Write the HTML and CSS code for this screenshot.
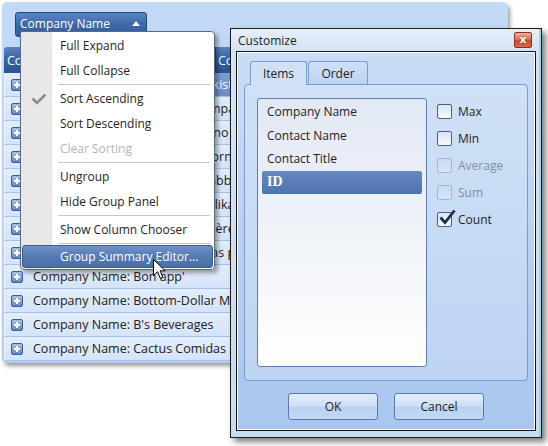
FILE: index.html
```html
<!DOCTYPE html>
<html>
<head>
<meta charset="utf-8">
<link rel="stylesheet" href="styles.css">
</head>
<body>
<div class="grid-window">
  <div class="group-panel">
    <div class="group-btn"><span>Company Name</span><span class="sort-arrow"></span></div>
  </div>
  <div class="grid">
    <div class="hdr"><div class="hcell c1">Contact Name</div><div class="hcell c2">Contact Title</div></div>
    <div class="row focused"><span class="exp"><i></i></span><span class="txt">Company Name: Alfreds Futterkiste</span></div>
    <div class="row"><span class="exp"><i></i></span><span class="txt">Company Name: Ana Trujillo Emparedados y helados</span></div>
    <div class="row"><span class="exp"><i></i></span><span class="txt">Company Name: Antonio Moreno Taquería</span></div>
    <div class="row"><span class="exp"><i></i></span><span class="txt">Company Name: Around the Horn</span></div>
    <div class="row"><span class="exp"><i></i></span><span class="txt">Company Name: Berglunds snabbköp</span></div>
    <div class="row"><span class="exp"><i></i></span><span class="txt">Company Name: Blauer See Delikatessen</span></div>
    <div class="row"><span class="exp"><i></i></span><span class="txt">Company Name: Blondesddsl père et fils</span></div>
    <div class="row"><span class="exp"><i></i></span><span class="txt">Company Name: Bólido Comidas preparadas</span></div>
    <div class="row"><span class="exp"><i></i></span><span class="txt">Company Name: Bon app'</span></div>
    <div class="row"><span class="exp"><i></i></span><span class="txt">Company Name: Bottom-Dollar Markets</span></div>
    <div class="row"><span class="exp"><i></i></span><span class="txt">Company Name: B's Beverages</span></div>
    <div class="row"><span class="exp"><i></i></span><span class="txt">Company Name: Cactus Comidas para llevar</span></div>
  </div>
</div>

<div class="menu">
  <div class="mi">Full Expand</div>
  <div class="mi">Full Collapse</div>
  <div class="msep"></div>
  <div class="mi checked"><svg class="check" width="16" height="12" viewBox="0 0 16 12"><polyline points="1.5,5.5 6,10 14.5,1.5" fill="none" stroke="#8c8c8c" stroke-width="2.6"/></svg>Sort Ascending</div>
  <div class="mi">Sort Descending</div>
  <div class="mi disabled">Clear Sorting</div>
  <div class="msep"></div>
  <div class="mi">Ungroup</div>
  <div class="mi">Hide Group Panel</div>
  <div class="msep"></div>
  <div class="mi">Show Column Chooser</div>
  <div class="msep"></div>
  <div class="mi hot">Group Summary Editor...</div>
</div>

<svg class="cursor" width="14" height="22" viewBox="0 0 14 22"><path d="M0.5,0.5 L0.5,16.5 L4.5,12.7 L7.3,19.3 L9.8,18.2 L7.1,11.8 L12.3,11.8 Z" fill="#fff" stroke="#000" stroke-width="1" stroke-linejoin="miter"/></svg>

<div class="dialog">
  <div class="title"><span>Customize</span><span class="close">x</span></div>
  <div class="client">
    <div class="tabs"><div class="tab active">Items</div><div class="tab">Order</div></div>
    <div class="panel">
      <div class="listbox">
        <div class="li">Company Name</div>
        <div class="li">Contact Name</div>
        <div class="li">Contact Title</div>
        <div class="li sel">ID</div>
      </div>
      <div class="checks">
        <div class="cb"><span class="box"></span>Max</div>
        <div class="cb"><span class="box"></span>Min</div>
        <div class="cb disabled"><span class="box"></span>Average</div>
        <div class="cb disabled"><span class="box"></span>Sum</div>
        <div class="cb"><span class="box"><svg class="tick" width="18" height="18" viewBox="0 0 18 18"><path d="M2.5,9.5 L7,14.5 L16.5,2.5" fill="none" stroke="#1c2f52" stroke-width="2.8"/></svg></span>Count</div>
      </div>
    </div>
    <div class="buttons"><div class="btn">OK</div><div class="btn">Cancel</div></div>
  </div>
</div>
</body>
</html>
```
FILE: styles.css
```css
html, body {
  margin: 0;
  padding: 0;
}
body {
  width: 548px;
  height: 446px;
  background: #fff;
  position: relative;
  overflow: hidden;
  font-family: "Open Sans", "Noto Sans", sans-serif;
  font-size: 12px;
  color: #1e1e1e;
}

/* grid window */
.grid-window {
  margin: 2px 0 0 2px;
  width: 506px;
  height: 361px;
  border-radius: 5px;
  background: linear-gradient(#c3daf7, #b3cdf1);
  box-shadow: 2px 3px 4px rgba(0, 0, 0, .4);
  overflow: hidden;
}
.group-panel {
  height: 45px;
  padding: 10px 0 0 13px;
  box-sizing: border-box;
}
.group-btn {
  width: 132px;
  height: 25px;
  box-sizing: border-box;
  border: 1px solid #234679;
  border-radius: 3px;
  background: linear-gradient(#5a86c4, #3d6aab 50%, #305d9d);
  color: #fff;
  display: flex;
  align-items: center;
  padding: 0 6px 3px 4px;
  font-size: 12px;
}
.sort-arrow {
  margin-left: auto;
  width: 0;
  height: 0;
  border-left: 4px solid transparent;
  border-right: 4px solid transparent;
  border-bottom: 5px solid #fff;
}
.grid {
  margin-left: 2px;
}
.hdr {
  display: flex;
  height: 26px;
  border-radius: 3px 3px 0 0;
  background: linear-gradient(#5a83bf, #3766a6 45%, #2a5391);
  color: #fff;
  font-size: 12.5px;
  overflow: hidden;
  white-space: nowrap;
}
.hcell {
  display: flex;
  align-items: center;
  box-sizing: border-box;
}
.hcell.c1 {
  width: 212px;
  padding-left: 3px;
  border-right: 1px solid #24477c;
}
.hcell.c2 {
  padding-left: 2px;
}
.row {
  display: flex;
  height: 24px;
  box-sizing: border-box;
  border-bottom: 1px solid #a8c3e9;
  border-left: 1px solid #eef4fd;
  background: linear-gradient(#e3edfb, #d4e3f8);
  white-space: nowrap;
  overflow: hidden;
  font-size: 12.5px;
}
.exp {
  width: 23px;
  flex: none;
  display: flex;
  align-items: center;
  padding-left: 6px;
  box-sizing: border-box;
}
.exp i {
  position: relative;
  width: 12px;
  height: 12px;
  box-sizing: border-box;
  border: 1px solid #3d5d99;
  border-radius: 2px;
  background: linear-gradient(#a9bde6, #6a88c6);
}
.exp i::before, .exp i::after {
  content: "";
  position: absolute;
  background: #fff;
}
.exp i::before {
  left: 2px;
  top: 4px;
  width: 6px;
  height: 2px;
}
.exp i::after {
  left: 4px;
  top: 2px;
  width: 2px;
  height: 6px;
}
.txt {
  flex: 1;
  display: flex;
  align-items: center;
  padding-left: 5px;
  color: #22201c;
}
.row.focused .txt {
  background: linear-gradient(#7c9ed3, #6a8ec8);
  color: #fff;
}

/* context menu */
.menu {
  position: absolute;
  left: 20px;
  top: 31px;
  width: 195px;
  box-sizing: border-box;
  border: 1px solid #5b6a80;
  border-radius: 2px 4px 4px 4px;
  padding: 1px 0 1px;
  background: linear-gradient(to right, #e8e8e8 31px, #fff 31px);
  box-shadow: 3px 3px 4px rgba(0, 0, 0, .35);
  font-size: 12px;
}
.mi {
  position: relative;
  height: 25px;
  line-height: 25px;
  padding-left: 39px;
  color: #1e1e1e;
  white-space: nowrap;
}
.mi.disabled {
  color: #b4b4b4;
}
.mi .check {
  position: absolute;
  left: 10px;
  top: 7px;
}
.msep {
  height: 1px;
  margin: 1px 4px 1px 37px;
  background: #c8c8c8;
}
.mi.hot {
  margin: 0 1px;
  height: 23px;
  line-height: 21px;
  padding-left: 37px;
  box-sizing: border-box;
  border: 1px solid #3a5a8e;
  border-radius: 3px;
  background: linear-gradient(#7193c8, #5579b3 50%, #4b6fa9);
  color: #fff;
}

.cursor {
  position: absolute;
  left: 153px;
  top: 259px;
}

/* dialog */
.dialog {
  position: absolute;
  left: 230px;
  top: 28px;
  width: 312px;
  height: 410px;
  box-sizing: border-box;
  border: 1px solid #1c1c1c;
  padding: 0 5px 5px;
  background: linear-gradient(#e6eef8, #d6e3f4 22px, #c9daf1);
  box-shadow: 4px 4px 6px rgba(0, 0, 0, .5), inset -2px 0 0 #9fd5e3;
}
.title {
  height: 22px;
  display: flex;
  align-items: center;
  padding-left: 2px;
  font-size: 12px;
  color: #1e1e1e;
}
.close {
  margin-left: auto;
  margin-right: 4px;
  width: 18px;
  height: 16px;
  box-sizing: border-box;
  border: 1px solid #8a3020;
  border-radius: 2px;
  background: linear-gradient(#eab0a0, #d9705a 45%, #c84a32 55%, #d66a52);
  color: #fff;
  font-family: "DejaVu Sans", sans-serif;
  font-weight: bold;
  font-size: 11px;
  line-height: 13px;
  text-align: center;
  text-shadow: 0 0 1px #5a1a10;
}
.client {
  height: 380px;
  box-sizing: border-box;
  border: 1px solid #151515;
  box-shadow: inset 0 0 0 1px #fff;
  background: linear-gradient(#c9dcf4, #a9c6ee);
  padding: 9px 7px 0;
}
.tabs {
  display: flex;
  height: 23px;
  padding-left: 6px;
  gap: 1px;
}
.tab {
  height: 23px;
  box-sizing: border-box;
  border: 1px solid #7b9bcc;
  border-bottom: none;
  border-radius: 3px 3px 0 0;
  background: linear-gradient(#cfe0f6, #bcd3f2);
  display: flex;
  align-items: center;
  justify-content: center;
  font-size: 12px;
}
.tab.active {
  width: 57px;
  height: 24px;
  position: relative;
  z-index: 1;
  background: #d0e1f6;
}
.tab:not(.active) {
  width: 60px;
}
.panel {
  height: 297px;
  box-sizing: border-box;
  border: 1px solid #7b9bcc;
  border-radius: 4px;
  background: linear-gradient(#d0e1f6, #bdd4f2);
  padding: 13px 0 0 12px;
  display: flex;
  gap: 10px;
}
.listbox {
  width: 170px;
  height: 269px;
  box-sizing: border-box;
  border: 1px solid #5e7ead;
  border-radius: 3px;
  background: linear-gradient(#e2e9f4, #f1f4f9 55%, #fff);
  padding: 1px 4px;
}
.li {
  height: 23.5px;
  display: flex;
  align-items: center;
  padding-left: 5px;
  font-size: 12px;
  color: #1e1e1e;
}
.li.sel {
  border-radius: 2px;
  background: linear-gradient(#6688c0, #4f73ad);
  color: #fff;
  font-family: "Liberation Serif", serif;
  font-weight: bold;
  font-size: 14px;
}
.checks {
  display: flex;
  flex-direction: column;
}
.cb {
  height: 27px;
  display: flex;
  align-items: center;
  font-size: 12px;
  color: #1e1e1e;
}
.box {
  position: relative;
  width: 15px;
  height: 15px;
  box-sizing: border-box;
  border: 1px solid #4b5f84;
  border-radius: 2px;
  background: linear-gradient(#d9e3f2, #f7f9fc);
  margin-right: 6px;
}
.cb.disabled {
  color: #7f90aa;
}
.cb.disabled .box {
  border-color: #a3b8d8;
  background: linear-gradient(#c8daf2, #d6e4f6);
}
.tick {
  position: absolute;
  left: 0;
  top: -5px;
}
.buttons {
  display: flex;
  justify-content: center;
  gap: 16px;
  margin-top: 12px;
}
.btn {
  width: 90px;
  height: 27px;
  box-sizing: border-box;
  border: 1px solid #5a7aad;
  border-radius: 3px;
  background: linear-gradient(#e0ecfa, #cfe0f6 48%, #b9d1f1 52%, #c2d8f4);
  display: flex;
  align-items: center;
  justify-content: center;
  font-size: 12px;
  color: #1e1e1e;
}
```
